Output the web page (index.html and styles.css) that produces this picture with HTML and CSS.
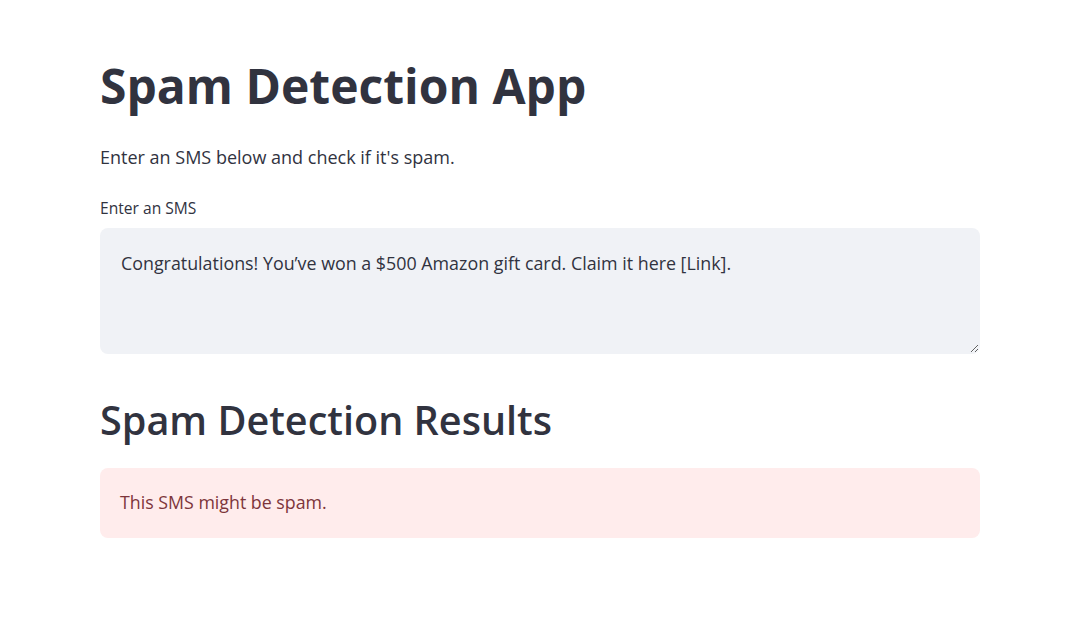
FILE: index.html
```html
<!DOCTYPE html>
<html lang="en">
<head>
<meta charset="utf-8">
<title>Spam Detection App</title>
<link rel="stylesheet" href="styles.css">
</head>
<body>
<main class="main">
  <h1 class="title">Spam Detection App</h1>
  <p class="intro">Enter an SMS below and check if it's spam.</p>
  <div class="field">
    <label class="field-label" for="sms">Enter an SMS</label>
    <textarea id="sms" class="sms-input">Congratulations! You’ve won a $500 Amazon gift card. Claim it here [Link].</textarea>
  </div>
  <h2 class="subtitle">Spam Detection Results</h2>
  <div class="alert alert-error">This SMS might be spam.</div>
</main>
</body>
</html>
```

FILE: styles.css
```css
* { box-sizing: border-box; }
html, body { margin: 0; padding: 0; background: #ffffff; }
body {
  font-family: "Open Sans", "Noto Sans", sans-serif;
  color: #31333F;
  width: 1066px;
  height: 618px;
  overflow: hidden;
}
.main {
  width: 880px;
  margin-left: 100px;
  padding-top: 56px;
  display: flex;
  flex-direction: column;
}
.title {
  margin: 0;
  font-size: 48px;
  font-weight: 700;
  line-height: 60px;
}
.intro {
  margin: 27px 0 0 0;
  font-size: 18px;
  line-height: 28px;
}
.field {
  display: flex;
  flex-direction: column;
  margin-top: 25px;
}
.field-label {
  font-size: 15.6px;
  line-height: 24px;
  height: 32px;
}
.sms-input {
  width: 880px;
  height: 126px;
  border: 1px solid transparent;
  border-radius: 8px;
  background: #F0F2F6;
  color: #31333F;
  font-family: inherit;
  font-size: 17.85px;
  line-height: 28px;
  padding: 20px 20px;
  resize: vertical;
  outline: none;
}
.subtitle {
  margin: 42px 0 0 0;
  font-size: 39.6px;
  font-weight: 600;
  line-height: 48px;
}
.alert {
  margin-top: 24px;
  height: 70px;
  border-radius: 8px;
  padding: 20px 20px;
  font-size: 17.8px;
  line-height: 28px;
}
.alert-error {
  background: #FFECEC;
  color: #7D353B;
}
```
